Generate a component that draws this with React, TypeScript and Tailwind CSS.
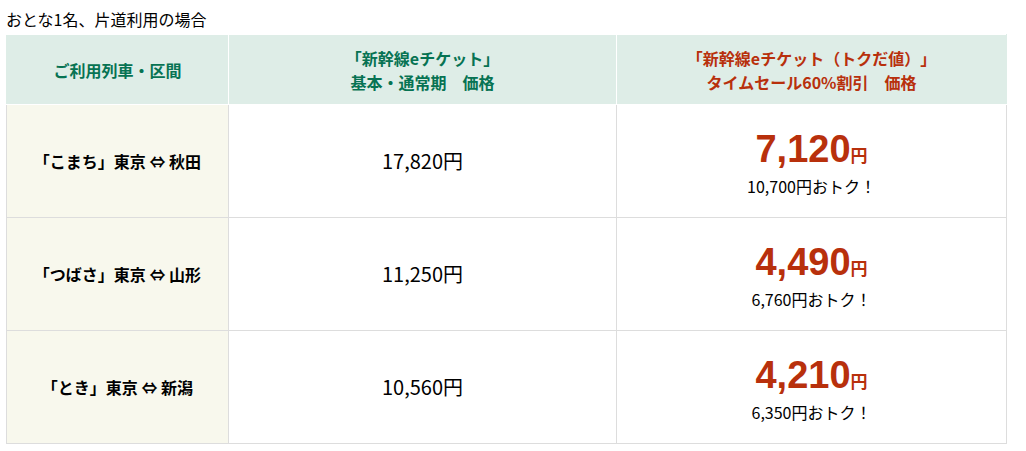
import React from 'react';

const rows = [
  { name: '「こまち」東京 ⇔ 秋田', normal: '17,820円', sale: '7,120', save: '10,700円おトク！' },
  { name: '「つばさ」東京 ⇔ 山形', normal: '11,250円', sale: '4,490', save: '6,760円おトク！' },
  { name: '「とき」東京 ⇔ 新潟', normal: '10,560円', sale: '4,210', save: '6,350円おトク！' },
];

const App = () => {
  return (
    <div
      className="bg-white px-[6px] pt-[8px] text-black [text-spacing-trim:space-all]"
      style={{ fontFamily: '"Noto Sans CJK JP", "Noto Sans", sans-serif' }}
    >
      <p className="text-[16px] leading-[22px] mb-[4px]">おとな1名、片道利用の場合</p>
      <table className="w-[1000px] border-collapse table-fixed">
        <colgroup>
          <col className="w-[222px]" />
          <col className="w-[388px]" />
          <col className="w-[390px]" />
        </colgroup>
        <thead>
          <tr className="h-[70px] bg-[#deede7] text-[16px] font-bold leading-[24px]">
            <th className="border border-white border-l-[#deede7] text-[#077353]">ご利用列車・区間</th>
            <th className="border border-white text-[#077353]">
              「新幹線eチケット」
              <br />
              基本・通常期　価格
            </th>
            <th className="border border-white border-r-[#deede7] text-[#b8300c]">
              「新幹線eチケット（トクだ値）」
              <br />
              タイムセール60%割引　価格
            </th>
          </tr>
        </thead>
        <tbody>
          {rows.map((row) => (
            <tr key={row.name} className="h-[113px]">
              <td className="border border-[#dddddd] bg-[#f8f8ed] text-center text-[16px] font-bold">{row.name}</td>
              <td className="border border-[#dddddd] text-center text-[20px]">{row.normal}</td>
              <td className="border border-[#dddddd] text-center">
                <div className="text-[#b8300c] font-bold leading-[38px] pt-[6px]">
                  <span className="text-[38px]" style={{ fontFamily: '"Liberation Sans", Arial, sans-serif' }}>{row.sale}</span>
                  <span className="text-[17px]">円</span>
                </div>
                <div className="text-[16px] leading-[24px]">{row.save}</div>
              </td>
            </tr>
          ))}
        </tbody>
      </table>
    </div>
  );
};

export default App;
